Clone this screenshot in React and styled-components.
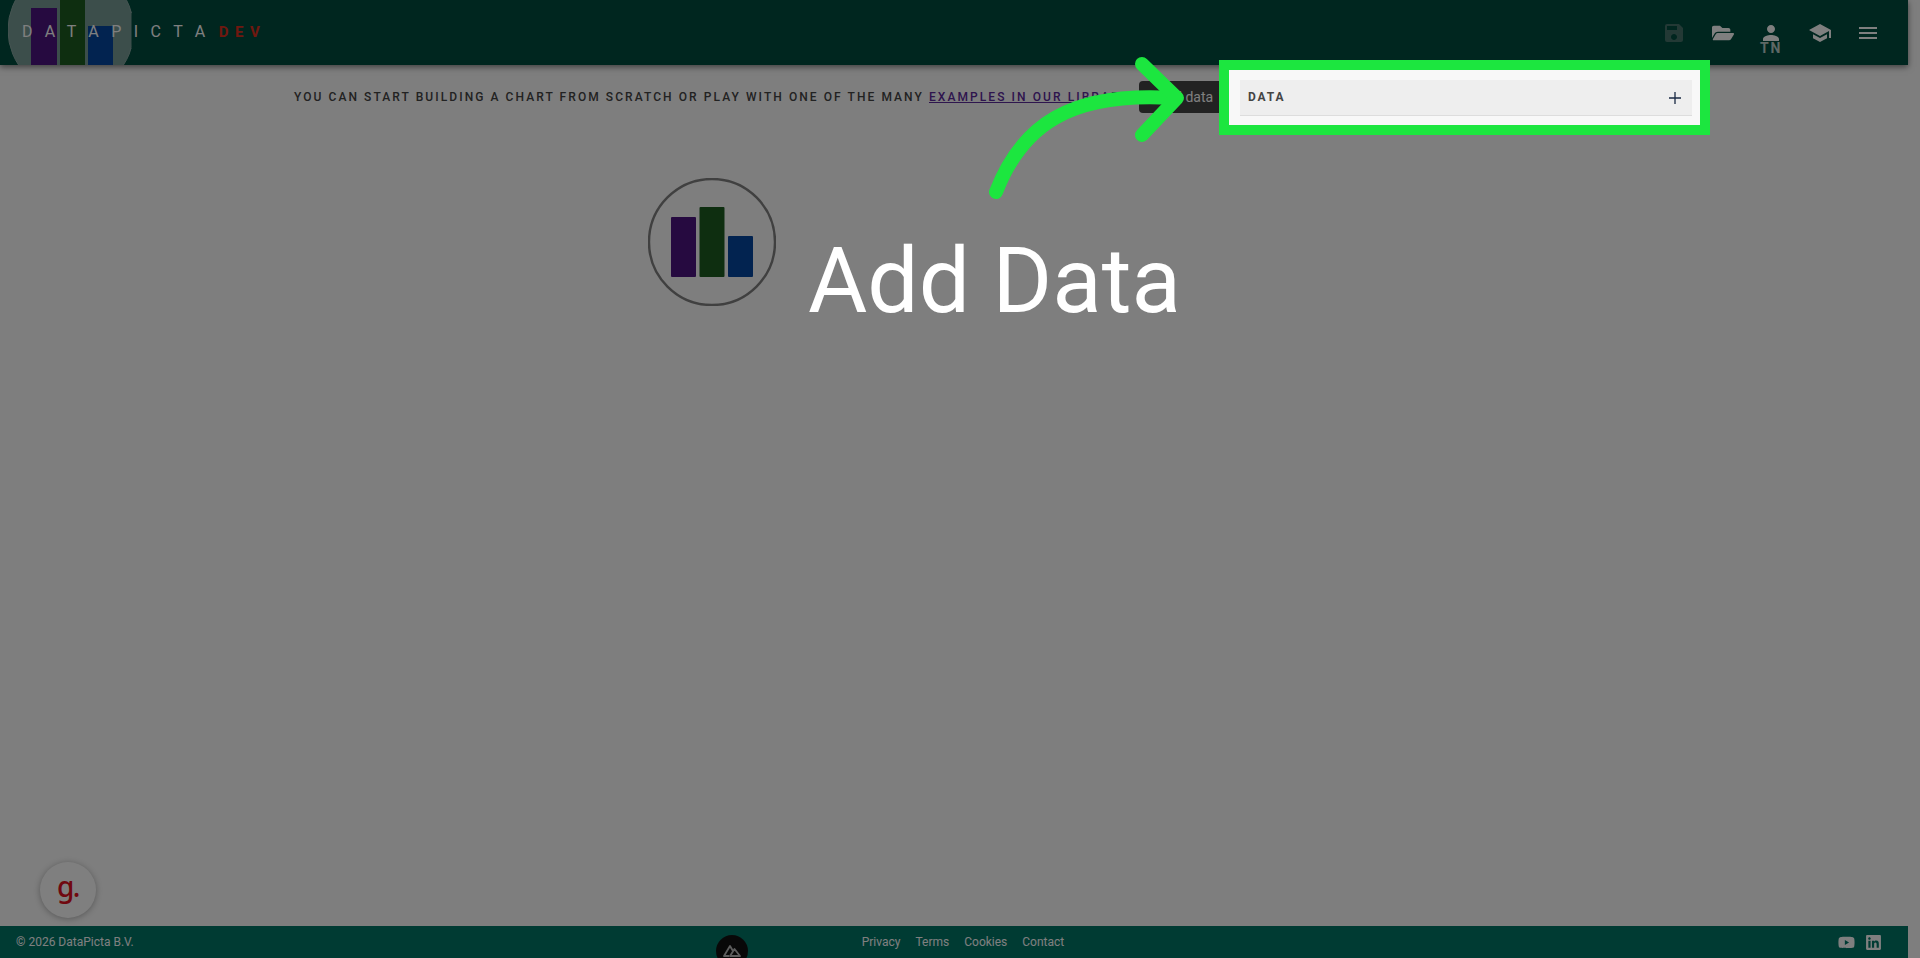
import React from 'react';
import styled, { createGlobalStyle } from 'styled-components';
import { MdSave, MdPerson, MdSchool, MdMenu } from 'react-icons/md';
import { FaFolderOpen, FaYoutube, FaLinkedin } from 'react-icons/fa';

const Global = createGlobalStyle`
  html, body { margin: 0; padding: 0; height: 100%; overflow: hidden; background: #fcfcfc; }
  body { font-family: Roboto, "Liberation Sans", sans-serif; }
  * { box-sizing: border-box; }
`;

const Page = styled.div`
  width: 1920px; height: 958px; position: relative; overflow: hidden;
  display: flex; flex-direction: column; padding-right: 12px; background: #fcfcfc;
`;
const Header = styled.header`
  height: 65px; flex: none; background: #004c3e; display: flex; align-items: center;
  justify-content: space-between; position: relative; overflow: hidden;
  box-shadow: 0 2px 6px rgba(0,0,0,.5); z-index: 1;
`;
const Brand = styled.div`
  display: flex; align-items: baseline; padding-left: 22px; position: relative;
  font-size: 16px; height: 65px; line-height: 63px;
`;
const BrandMark = styled.svg`
  position: absolute; left: 8px; top: -34px; width: 128px; height: 128px;
`;
const BrandName = styled.span`
  position: relative; letter-spacing: 12.5px; color: #fff; font-weight: 400; margin-right: 1px;
`;
const BrandTag = styled.span`
  position: relative; letter-spacing: 6.6px; color: #e0301e; font-weight: 700; font-size: 15px;
`;
const Tools = styled.nav`
  display: flex; align-items: flex-start; height: 65px; padding-top: 21px; padding-right: 28px; gap: 24.5px;
`;
const Tool = styled.button`
  width: 24px; height: 24px; padding: 0; border: 0; background: none; position: relative;
  color: ${p => (p.$off ? '#46726a' : '#fff')}; font-size: ${p => p.$size || 24}px; display: flex;
  align-items: center; justify-content: center; font-family: inherit;
`;
const ToolNote = styled.span`
  position: absolute; top: 20px; left: 50%; transform: translateX(-50%); font-size: 14px;
  font-weight: 700; letter-spacing: 1.6px; color: #bcd0cb; line-height: 14px;
`;
const Main = styled.main`
  flex: 1; display: flex; flex-direction: column; min-height: 0;
`;
const IntroRow = styled.div`
  display: flex; align-items: flex-start; padding: 5px 0 0 294px; height: 125px; flex: none;
`;
const Intro = styled.p`
  margin: 0; width: 845px; flex: none; font-size: 12px; font-weight: 500; letter-spacing: 2.07px;
  line-height: 14px; color: #444; padding-top: 20px; white-space: nowrap; overflow: visible;
`;
const Link = styled.a`
  color: #5c2a9d; text-decoration: underline;
`;
const AddButton = styled.button`
  flex: none; width: 90px; height: 32px; margin-top: 11px; padding: 0 0 0 18px; border: 0; border-radius: 4px;
  background: #444; color: #fff; font-family: inherit; font-size: 14px; text-align: left; white-space: nowrap;
`;
const Panel = styled.section`
  flex: none; width: 471px; height: 55px; padding: 10px 8px 9px 11px; background: #f8f8f8;
  outline: 10px solid #1ce63f; position: relative; z-index: 3;
`;
const PanelRow = styled.div`
  height: 36px; background: #eee; border-bottom: 1px solid #ddd; display: flex; align-items: center;
  justify-content: space-between; padding: 0 11px 1px 8px;
`;
const PanelTitle = styled.span`
  font-size: 12px; font-weight: 700; letter-spacing: 1.9px; color: #444; line-height: 14px; margin-top: -1px;
`;
const Plus = styled.svg`
  width: 12px; height: 12px; color: #1a2a44; margin-top: 2px;
`;
const Hero = styled.svg`
  width: 128px; height: 128px; display: block; margin-left: 648px; flex: none; margin-top: -12px;
`;
const Footer = styled.footer`
  height: 32px; flex: none; background: #007667; display: grid; grid-template-columns: 1fr auto 1fr;
  align-items: center; padding: 0 26px 0 16px; position: relative; margin-top: auto; z-index: 1;
`;
const Copy = styled.span`
  font-size: 12px; color: #fff; line-height: 14px;
`;
const FootLinks = styled.nav`
  display: flex; gap: 15px; font-size: 12px; color: #fff; margin-left: 28px;
`;
const Socials = styled.div`
  display: flex; justify-content: flex-end; gap: 10px; color: #fff; font-size: 17px;
`;
const NuxtBadge = styled.div`
  position: absolute; left: 716px; top: 9px; width: 32px; height: 32px; border-radius: 50%;
  background: #111; display: flex; align-items: flex-start; justify-content: center; padding-top: 9px;
`;
const Chat = styled.div`
  position: absolute; left: 40px; bottom: 40px; width: 56px; height: 56px; border-radius: 50%;
  background: #fff; box-shadow: 0 1px 6px rgba(0,0,0,.3); color: #e01020; display: flex;
  align-items: center; justify-content: center; font: 500 28px/1 "Noto Sans", sans-serif;
  letter-spacing: -1.5px; padding-bottom: 8px; z-index: 1;
`;
const Dim = styled.div`
  position: absolute; inset: 0; background: rgba(0,0,0,.5); z-index: 2;
`;
const Arrow = styled.svg`
  position: absolute; left: 0; top: 0; width: 1920px; height: 958px; z-index: 4; pointer-events: none;
`;
const Caption = styled.div`
  position: absolute; left: 808px; top: 228px; font-size: 91px; line-height: 106px; color: #fff;
  font-weight: 400; white-space: nowrap; z-index: 4;
`;

const Bars = () => (
  <g>
    <rect x="23" y="39" width="25" height="60" rx="1" fill="#4c1480" />
    <rect x="51.5" y="29" width="25" height="70" rx="1" fill="#1c5c20" />
    <rect x="80" y="58" width="25" height="41" rx="1" fill="#0446a0" />
  </g>
);

export default function App() {
  return (
    <Page>
      <Global />
      <Header>
        <Brand>
          <BrandMark viewBox="0 0 128 128">
            <circle cx="63" cy="64" r="63" fill="#789c96" stroke="#8aa8a3" strokeWidth="1" />
            <rect x="123.500" y="47" width="5" height="35" fill="#004c3e" />
            <rect x="23" y="42" width="26" height="90" fill="#4c1480" />
            <rect x="52" y="20" width="25" height="110" fill="#1c5c20" />
            <rect x="80" y="60" width="25" height="70" fill="#0446a0" />
          </BrandMark>
          <BrandName>DATAPICTA</BrandName>
          <BrandTag>DEV</BrandTag>
        </Brand>
        <Tools>
          <Tool $off><MdSave /></Tool>
          <Tool $size={22}><FaFolderOpen /></Tool>
          <Tool><MdPerson /><ToolNote>TN</ToolNote></Tool>
          <Tool><MdSchool /></Tool>
          <Tool><MdMenu /></Tool>
        </Tools>
      </Header>
      <Main>
        <IntroRow>
          <Intro>YOU CAN START BUILDING A CHART FROM SCRATCH OR PLAY WITH ONE OF THE MANY <Link>EXAMPLES IN OUR LIBRARY</Link></Intro>
          <AddButton>Add data</AddButton>
          <Panel>
            <PanelRow>
              <PanelTitle>DATA</PanelTitle>
              <Plus viewBox="0 0 12 12"><path d="M6 0v12M0 6h12" stroke="currentColor" strokeWidth="1.3" /></Plus>
            </PanelRow>
          </Panel>
        </IntroRow>
        <Hero viewBox="0 0 128 128">
          <circle cx="64" cy="64" r="63" fill="none" stroke="#808080" strokeWidth="2.400" />
          <Bars />
        </Hero>
      </Main>
      <Footer>
        <Copy>© 2026 DataPicta B.V.</Copy>
        <FootLinks>
          <span>Privacy</span><span>Terms</span><span>Cookies</span><span>Contact</span>
        </FootLinks>
        <Socials><FaYoutube /><FaLinkedin /></Socials>
        <NuxtBadge>
          <svg width="20" height="13" viewBox="0 0 20 13" fill="none" stroke="#bbb" strokeWidth="1.8" strokeLinejoin="round">
            <path d="M7 12H2L8 2l3 5" />
            <path d="M8 12l4.500-7L18 12H8z" />
          </svg>
        </NuxtBadge>
      </Footer>
      <Chat>g.</Chat>
      <Dim />
      <Arrow viewBox="0 0 1920 958" fill="none" stroke="#1ce63f" strokeWidth="14" strokeLinecap="round" strokeLinejoin="round">
        <path d="M996 192C1022 125 1070 92 1172 98" />
        <path d="M1142 64L1177 98L1142 135" />
      </Arrow>
      <Caption>Add Data</Caption>
    </Page>
  );
}
